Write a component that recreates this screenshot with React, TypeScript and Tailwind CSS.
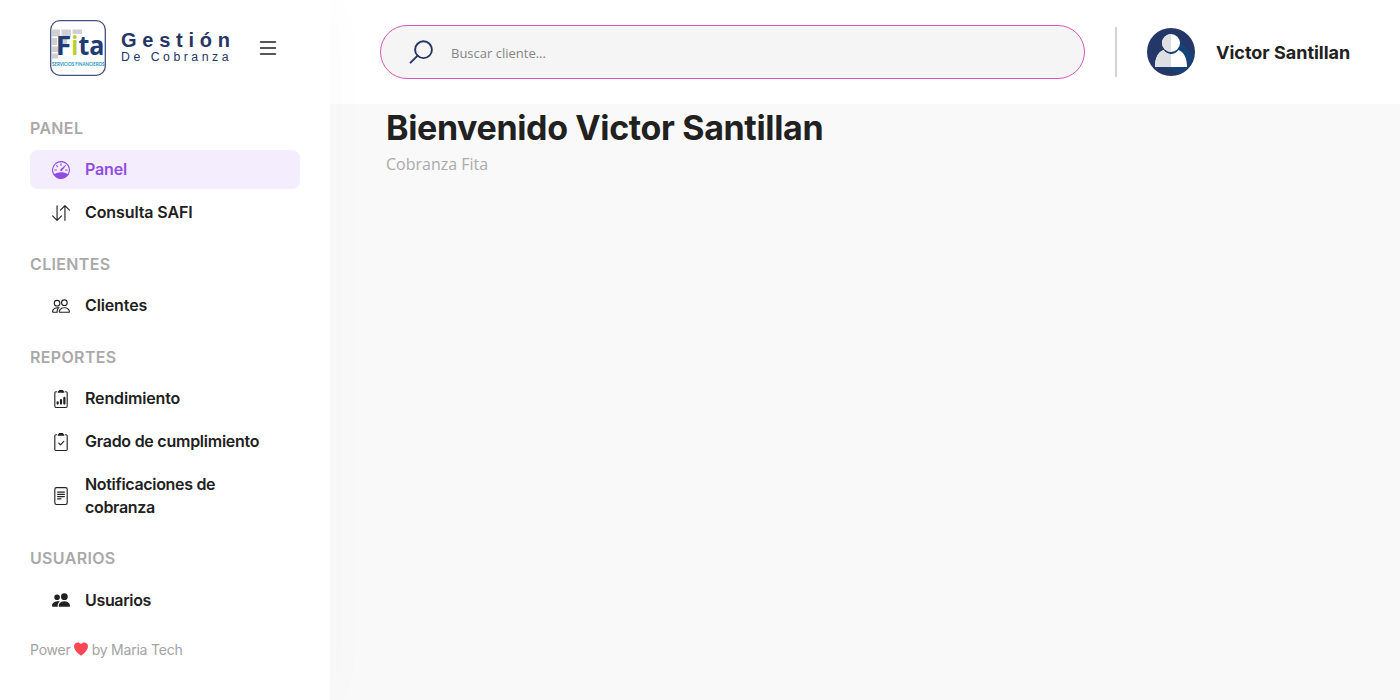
import React from "react";
import type { IconType } from "react-icons";
import {
  BsArrowDownUp,
  BsClipboard2Check,
  BsClipboard2Data,
  BsFileText,
  BsList,
  BsPeople,
  BsPeopleFill,
  BsSpeedometer,
} from "react-icons/bs";

type MenuItem = {
  label: string;
  icon: IconType;
  spacing: string;
  active?: boolean;
};

type MenuSection = {
  title: string;
  items: MenuItem[];
};

const menu: MenuSection[] = [
  {
    title: "PANEL",
    items: [
      { label: "Panel", icon: BsSpeedometer, spacing: "tracking-[-0.14px]", active: true },
      { label: "Consulta SAFI", icon: BsArrowDownUp, spacing: "tracking-[-0.1px]" },
    ],
  },
  {
    title: "CLIENTES",
    items: [{ label: "Clientes", icon: BsPeople, spacing: "tracking-[-0.13px]" }],
  },
  {
    title: "REPORTES",
    items: [
      { label: "Rendimiento", icon: BsClipboard2Data, spacing: "tracking-[-0.14px]" },
      { label: "Grado de cumplimiento", icon: BsClipboard2Check, spacing: "tracking-[-0.25px]" },
      { label: "Notificaciones de cobranza", icon: BsFileText, spacing: "tracking-[-0.32px]" },
    ],
  },
  {
    title: "USUARIOS",
    items: [{ label: "Usuarios", icon: BsPeopleFill, spacing: "tracking-[-0.34px]" }],
  },
];

const Logo = () => (
  <svg width="182" height="58" viewBox="0 0 182 58" className="shrink-0">
    <rect x="1.7" y="1.7" width="54.6" height="54.6" rx="9" fill="#fff" stroke="#44527f" strokeWidth="1.3" />
    {/* Bricks */}
    <g fill="#cfd0d3">
      <rect x="3" y="10.5" width="8" height="7" />
      <rect x="12.5" y="10.5" width="9.5" height="7" />
      <rect x="23.5" y="10.5" width="9.5" height="4.5" />
      <rect x="3" y="19" width="5" height="7" />
      <rect x="9" y="19" width="9" height="7" />
      <rect x="3" y="27.5" width="8" height="5.5" />
      <rect x="3" y="34.5" width="6" height="5" />
    </g>
    <g fontFamily="Open Sans, sans-serif" fontWeight="700" fontSize="27">
      <text x="6.8" y="36.3" fill="#1f3c74" textLength="15.5" lengthAdjust="spacingAndGlyphs">F</text>
      <text x="22.3" y="36.3" fill="#b9cf31" textLength="7" lengthAdjust="spacingAndGlyphs">i</text>
      <text x="29.5" y="36.3" fill="#1f3c74" textLength="26" lengthAdjust="spacingAndGlyphs">ta</text>
    </g>
    <text x="3" y="46.5" fill="#1791bd" fontFamily="Lato, sans-serif" fontWeight="700" fontSize="4.8" textLength="52.5" lengthAdjust="spacingAndGlyphs">
      SERVICIOS FINANCIEROS
    </text>
    <g fontFamily="Liberation Sans, Arial, sans-serif" fill="#273566">
      <text x="72" y="28" fontWeight="700" fontSize="20" textLength="109">Gestión</text>
      <text x="72" y="42" fontSize="12.3" textLength="107.5">De Cobranza</text>
    </g>
  </svg>
);

const Avatar = () => (
  <svg width="48" height="48" viewBox="0 0 48 48" className="shrink-0">
    <circle cx="24" cy="24" r="24" fill="#233768" />
    <path d="M31 12 L47 27 A24 24 0 0 1 35 45 L16 39 Z" fill="#174277" />
    <path d="M8 39 C8 30 11 24 16.5 22 C20 27.2 28 27.2 31.5 22 C37 24 40 30 40 39 Z" fill="#fff" />
    <path d="M8 39 C8 30 11 24 16.5 22 C18.5 24.7 21 25.9 24 25.9 V39 Z" fill="#dedfe1" />
    <circle cx="24" cy="15" r="9" fill="#fff" />
    <path d="M24 6 A9 9 0 0 0 24 24 Z" fill="#dedfe1" />
  </svg>
);

const SearchIcon = () => (
  <svg width="24" height="24" viewBox="0 0 24 24" className="shrink-0" fill="none" stroke="#243665" strokeWidth="1.9" strokeLinecap="round">
    <circle cx="14.5" cy="9.7" r="8.4" />
    <path d="M8.6 15.7 L1.6 22.7" />
  </svg>
);

const Sidebar = () => (
  <aside className="z-10 flex w-[330px] shrink-0 flex-col bg-white shadow-[0_0_50px_rgba(0,0,0,0.025)]">
    <div className="flex h-[116.8px] items-start pl-[49px] pt-[19px]">
      <Logo />
      <button className="ml-[25px] mt-[17px] text-[#212121]">
        <BsList size={24} />
      </button>
    </div>
    <nav className="flex flex-col gap-[21px] px-[30px]">
      {menu.map((section) => (
        <div key={section.title}>
          <h2 className="mb-[11.5px] text-[16px] font-semibold leading-[22px] tracking-[0.34px] text-[#a9a9a9]">
            {section.title}
          </h2>
          <ul className="flex flex-col gap-[4.5px]">
            {section.items.map((item) => {
              const Icon = item.icon;
              return (
                <li
                  key={item.label}
                  className={`flex items-center gap-[15px] rounded-lg py-2 pl-[22px] pr-4 text-[16px] font-semibold leading-[22.5px] ${
                    item.active ? "bg-[#f4edfe] text-[#914de3]" : "text-[#212121]"
                  }`}
                >
                  <Icon size={18} className="shrink-0" />
                  <span className={`max-w-[176px] ${item.spacing}`}>{item.label}</span>
                </li>
              );
            })}
          </ul>
        </div>
      ))}
    </nav>
    <footer className="mt-[18.5px] flex items-center pl-[30px] text-[14px] leading-[23px] text-[#a3a3a3]">
      <span className="tracking-[-0.2px]">Power</span>
      <svg width="14" height="14" viewBox="0 0 14 14" className="ml-[3.5px] mr-[3.5px]">
        <path d="M7 13.7 C5 12 0 8.5 0 4.2 C0 0 5.2-.7 7 2 C8.8-.7 14 0 14 4.2 C14 8.5 9 12 7 13.7Z" fill="#ff4754" />
      </svg>
      <span className="tracking-[-0.22px]">by Maria Tech</span>
    </footer>
  </aside>
);

const Header = () => (
  <header className="flex h-[104px] items-center bg-white pl-[50px]">
    <div className="flex h-[54px] w-[705px] items-center rounded-full border border-[#d858b7] bg-[#f5f5f5] pl-[27.5px]">
      <SearchIcon />
      <input
        type="text"
        placeholder="Buscar cliente..."
        className="ml-[18.5px] mt-[3px] w-[500px] bg-transparent font-['Open_Sans',sans-serif] text-[13px] outline-none placeholder:text-[#858585]"
      />
    </div>
    <div className="ml-[30px] h-[50px] w-[1.5px] bg-[#d4d4d4]" />
    <div className="ml-[30.5px] flex items-center gap-[21px]">
      <Avatar />
      <span className="whitespace-nowrap text-[18px] font-bold text-[#212121]">Victor Santillan</span>
    </div>
  </header>
);

const App = () => {
  return (
    <div className="flex h-screen overflow-hidden bg-[#f9f9f9] font-[Inter,sans-serif]">
      <Sidebar />
      <div className="flex flex-1 flex-col">
        <Header />
        <main className="pl-[56px]">
          <h1 className="whitespace-nowrap text-[34px] font-bold leading-[48px] tracking-[-0.36px] text-[#212121]">
            Bienvenido Victor Santillan
          </h1>
          <p className="font-['Open_Sans',sans-serif] text-[16px] leading-[25px] text-[#ababab]">Cobranza Fita</p>
        </main>
      </div>
    </div>
  );
};

export default App;
